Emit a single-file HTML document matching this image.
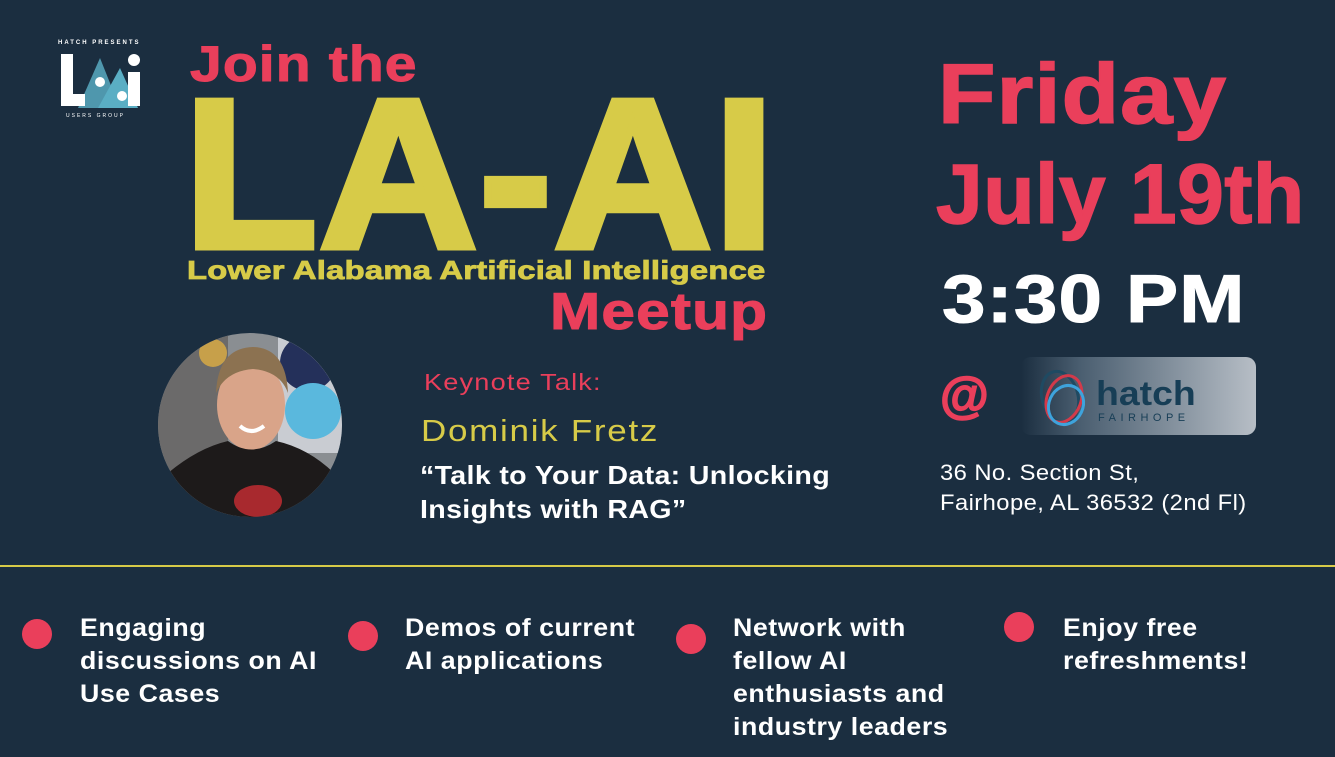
<!DOCTYPE html>
<html><head><meta charset="utf-8"><style>
*{margin:0;padding:0;box-sizing:border-box}
body{width:1335px;height:757px;background:#1b2e40;position:relative;overflow:hidden;font-family:"Liberation Sans",sans-serif}
.a{position:absolute;white-space:nowrap;transform-origin:0 0}
.red{color:#ea3f5b}.yel{color:#d7cb48}.wh{color:#fff}
.dot{position:absolute;width:30px;height:30px;border-radius:50%;background:#ea3f5b}
.bt{position:absolute;color:#fff;font-size:25px;line-height:33px;font-weight:bold;letter-spacing:0.5px;transform:scaleX(1.07);transform-origin:0 0;white-space:nowrap}
</style></head><body>
<!-- logo -->
<div class="a wh" style="left:58px;top:40px;font-size:6px;letter-spacing:2px;font-weight:bold">HATCH PRESENTS</div>
<svg class="a" style="left:58px;top:50px" width="88" height="60" viewBox="0 0 88 60">
<polygon points="20,58 42,8 62,58" fill="#4f97ad"/>
<polygon points="40,58 62,18 80,58" fill="#5aaec4"/>
<rect x="3" y="4" width="12" height="52" fill="#fff"/><rect x="3" y="44" width="24" height="12" fill="#fff"/>
<circle cx="42" cy="32" r="5" fill="#fff"/><circle cx="64" cy="46" r="5" fill="#fff"/>
<circle cx="76" cy="10" r="6" fill="#fff"/><rect x="70" y="22" width="12" height="34" fill="#fff"/>
</svg>
<div class="a wh" style="left:66px;top:113px;font-size:5px;letter-spacing:2px">USERS GROUP</div>

<div class="a red" style="left:190px;top:36px;font-size:50px;font-weight:bold;letter-spacing:1px;line-height:56px;transform:scaleX(1.14);-webkit-text-stroke:1px #ea3f5b">Join the</div>
<div class="a yel" style="left:184px;top:64px;font-size:212px;font-weight:bold;line-height:220px;letter-spacing:2px;transform:scaleX(1.03);-webkit-text-stroke:7px #d7cb48">LA-AI</div>
<div class="a yel" style="left:187px;top:254px;font-size:26px;font-weight:bold;line-height:32px;letter-spacing:0.2px;transform:scaleX(1.26);-webkit-text-stroke:0.8px #d7cb48">Lower Alabama Artificial Intelligence</div>
<div class="a red" style="left:550px;top:282px;font-size:52px;font-weight:bold;line-height:60px;letter-spacing:1px;transform:scaleX(1.16);-webkit-text-stroke:1px #ea3f5b">Meetup</div>

<!-- photo -->
<svg class="a" style="left:158px;top:333px" width="184" height="184" viewBox="0 0 184 184">
<defs><clipPath id="c"><circle cx="92" cy="92" r="92"/></clipPath></defs>
<g clip-path="url(#c)">
<rect width="184" height="184" fill="#8a8e92"/>
<rect x="0" y="0" width="70" height="184" fill="#6b6a6a"/>
<rect x="120" y="0" width="64" height="120" fill="#c9ccd2"/>
<circle cx="150" cy="30" r="28" fill="#24305a"/>
<circle cx="155" cy="78" r="28" fill="#5ab8dd"/>
<circle cx="55" cy="20" r="14" fill="#c7a04a"/>
<ellipse cx="93" cy="72" rx="34" ry="45" fill="#d9a489"/>
<path d="M58 60 Q60 15 95 14 Q128 15 130 60 Q122 38 95 36 Q68 38 58 60Z" fill="#8c7251"/>
<path d="M0 184 L10 140 Q40 115 70 108 Q93 125 118 108 Q150 115 176 140 L184 184Z" fill="#1d1a1a"/>
<ellipse cx="100" cy="168" rx="24" ry="16" fill="#a8292e"/>
<path d="M82 93 Q93 103 106 93" stroke="#fff" stroke-width="4" fill="none"/>
</g></svg>

<div class="a red" style="left:424px;top:368px;font-size:23px;letter-spacing:1px;line-height:28px;transform:scaleX(1.18)">Keynote Talk:</div>
<div class="a yel" style="left:421px;top:413px;font-size:31px;letter-spacing:1.5px;line-height:36px;transform:scaleX(1.13)">Dominik Fretz</div>
<div class="a wh" style="left:420px;top:458px;font-size:26px;font-weight:bold;line-height:34px;letter-spacing:0.3px;transform:scaleX(1.1)">“Talk to Your Data: Unlocking<br>Insights with RAG”</div>

<div class="a red" style="left:938px;top:46px;font-size:84px;font-weight:bold;line-height:96px;letter-spacing:1px;transform:scaleX(1.12);-webkit-text-stroke:1.5px #ea3f5b">Friday</div>
<div class="a red" style="left:936px;top:146px;font-size:84px;font-weight:bold;line-height:96px;letter-spacing:0.5px;-webkit-text-stroke:1.5px #ea3f5b">July 19th</div>
<div class="a wh" style="left:942px;top:262px;font-size:68px;font-weight:bold;line-height:74px;letter-spacing:1px;transform:scaleX(1.15);-webkit-text-stroke:1px #fff">3:30 PM</div>
<div class="a red" style="left:940px;top:365px;font-size:50px;font-weight:bold;line-height:60px;-webkit-text-stroke:1.5px #ea3f5b">@</div>
<div class="a" style="left:1021px;top:357px;width:235px;height:78px;border-radius:10px;background:linear-gradient(90deg,#1b2e40 0%,#4a5e70 25%,#b7bec6 100%)"></div>
<svg class="a" style="left:1036px;top:363px" width="60" height="68" viewBox="0 0 60 68">
<ellipse cx="24" cy="34" rx="18" ry="26" transform="rotate(-15 24 34)" fill="none" stroke="#1f4a62" stroke-width="3"/>
<ellipse cx="28" cy="36" rx="17" ry="24" transform="rotate(20 28 36)" fill="none" stroke="#d33a4a" stroke-width="3"/>
<ellipse cx="30" cy="42" rx="17" ry="20" transform="rotate(25 30 42)" fill="none" stroke="#3ea3dc" stroke-width="3"/>
</svg>
<div class="a" style="left:1096px;top:374px;font-size:34px;font-weight:bold;color:#173e56;line-height:40px;transform:scaleX(1.1)">hatch</div>
<div class="a" style="left:1098px;top:412px;font-size:11px;letter-spacing:4.5px;color:#173e56">FAIRHOPE</div>
<div class="a wh" style="left:940px;top:458px;font-size:22px;line-height:30px;letter-spacing:0.4px;transform:scaleX(1.08)">36 No. Section St,<br>Fairhope, AL 36532 (2nd Fl)</div>

<div class="a" style="left:0;top:565px;width:1335px;height:2px;background:#d7cb48"></div>

<div class="dot" style="left:22px;top:619px"></div>
<div class="bt" style="left:80px;top:612px">Engaging<br>discussions on AI<br>Use Cases</div>
<div class="dot" style="left:348px;top:621px"></div>
<div class="bt" style="left:405px;top:612px">Demos of current<br>AI applications</div>
<div class="dot" style="left:676px;top:624px"></div>
<div class="bt" style="left:733px;top:612px">Network with<br>fellow AI<br>enthusiasts and<br>industry leaders</div>
<div class="dot" style="left:1004px;top:612px"></div>
<div class="bt" style="left:1063px;top:612px">Enjoy free<br>refreshments!</div>
</body></html>
